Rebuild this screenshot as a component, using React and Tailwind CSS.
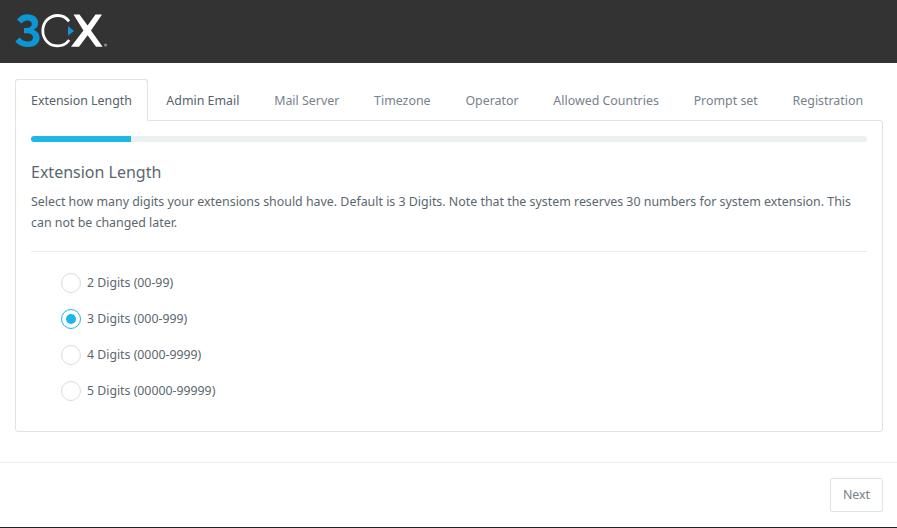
const tabs = [
  ["Extension Length", true],
  ["Admin Email", false],
  ["Mail Server"],
  ["Timezone"],
  ["Operator"],
  ["Allowed Countries"],
  ["Prompt set"],
  ["Registration"],
];
const options = [
  ["2 Digits (00-99)", false],
  ["3 Digits (000-999)", true],
  ["4 Digits (0000-9999)", false],
  ["5 Digits (00000-99999)", false],
];

function Logo() {
  return (
    <svg width="94" height="36" viewBox="0 0 94 36" fill="none">
      <path d="M2 5.5C4.8 2 8 0.3 12.5 0.3C19 0.3 23.2 3.8 23.2 9C23.2 12.3 21.4 14.6 18.4 15.8C22.2 17 24.6 19.8 24.6 24C24.6 29.6 19.8 33 13 33C7.8 33 3.5 31.2 0.3 27.5L4.6 23.4C6.8 25.9 9.6 27.4 12.8 27.4C16 27.4 18 25.9 18 23.4C18 20.7 15.6 19.2 11.2 19.2H9V14H11.2C14.6 14 16.8 12.6 16.8 10C16.8 7.9 15 6.5 12.5 6.5C10.2 6.5 8.2 7.6 6.3 9.6Z" fill="#0d96d4" />
      <path d="M54 7.4C51.2 3.6 47.6 1.5 42.8 1.5C34.4 1.5 27.8 8 27.8 16.8C27.8 25.6 34.4 31.9 42.8 31.9C47.6 31.9 51.4 29.8 54.2 26" stroke="#fff" strokeWidth="2.8" />
      <path d="M53 12V21.8L59 16.9Z" fill="#0d96d4" />
      <path d="M58.5 0.5H64.5L72.6 11.6L80.5 0.5H87L76 16.4L87.6 32.8H81L72.6 21.2L64 32.8H56L68.4 16.4Z" fill="#fff" />
      <circle cx="90.6" cy="31" r="1.6" fill="#8a8a8a" />
    </svg>
  );
}

export default function App() {
  return (
    <div className="w-[897px] h-[528px] flex flex-col bg-white overflow-hidden font-['Noto_Sans',sans-serif] text-[12.4px] text-[#5b6770]">
      <header className="h-[63px] shrink-0 bg-[#333333] flex items-center pl-[15px]">
        <Logo />
      </header>

      <main className="flex-1 pl-[15px] pr-[14px] pt-[16px] flex flex-col">
        <nav className="flex h-[42px] relative z-10">
          {tabs.map(([label, active], i) => (
            <div
              key={label}
              className={
                active
                  ? "h-[42px] px-[15px] pt-[3px] flex items-center border border-[#dde3e6] border-b-white rounded-t-[3px] bg-white text-[#55626b] mr-[2px]"
                  : "h-[41px] px-[16.4px] pt-[3px] flex items-center mr-[2px] " + (i === 1 ? "text-[#55626b]" : "text-[#76828b]")
              }
            >
              {label}
            </div>
          ))}
        </nav>
        <section className="h-[312px] -mt-px border border-[#dde3e6] rounded-b-[3px] rounded-tr-[3px] px-[15px] pt-[15px]">
          <div className="h-[6px] rounded-[3px] bg-[#ecf0f1] overflow-hidden">
            <div className="h-full w-[100px] bg-[#1cb8e8]" />
          </div>
          <h2 className="mt-[20px] text-[16px] leading-[20px] text-[#5b6770]">Extension Length</h2>
          <p className="mt-[9px] text-[12.4px] leading-[21px] text-[#5b6770]">
            Select how many digits your extensions should have. Default is 3 Digits. Note that the system reserves 30 numbers for system extension. This can not be changed later.
          </p>
          <hr className="mt-[18px] border-[#e8ecee]" />
          <div className="mt-[13px] pl-[30px] flex flex-col">
            {options.map(([label, checked]) => (
              <label key={label} className="h-[36px] flex items-center gap-[6px]">
                <span
                  className={
                    "w-[20px] h-[20px] rounded-full border bg-white flex items-center justify-center " +
                    (checked ? "border-[#1cb8e8]" : "border-[#d5dde0]")
                  }
                >
                  {checked && <span className="w-[10px] h-[10px] rounded-full bg-[#1cb8e8]" />}
                </span>
                <span className="text-[12.3px]">{label}</span>
              </label>
            ))}
          </div>
        </section>
      </main>

      <footer className="h-[65px] shrink-0 border-t border-[#e8ecee] flex justify-end items-start pt-[15px] pr-[14px]">
        <button className="w-[53px] h-[34px] border border-[#dde3e6] rounded-[2px] bg-white text-[12.4px] text-[#76828b]">Next</button>
      </footer>
      <div className="h-[1px] shrink-0 bg-[#222]" />
    </div>
  );
}
